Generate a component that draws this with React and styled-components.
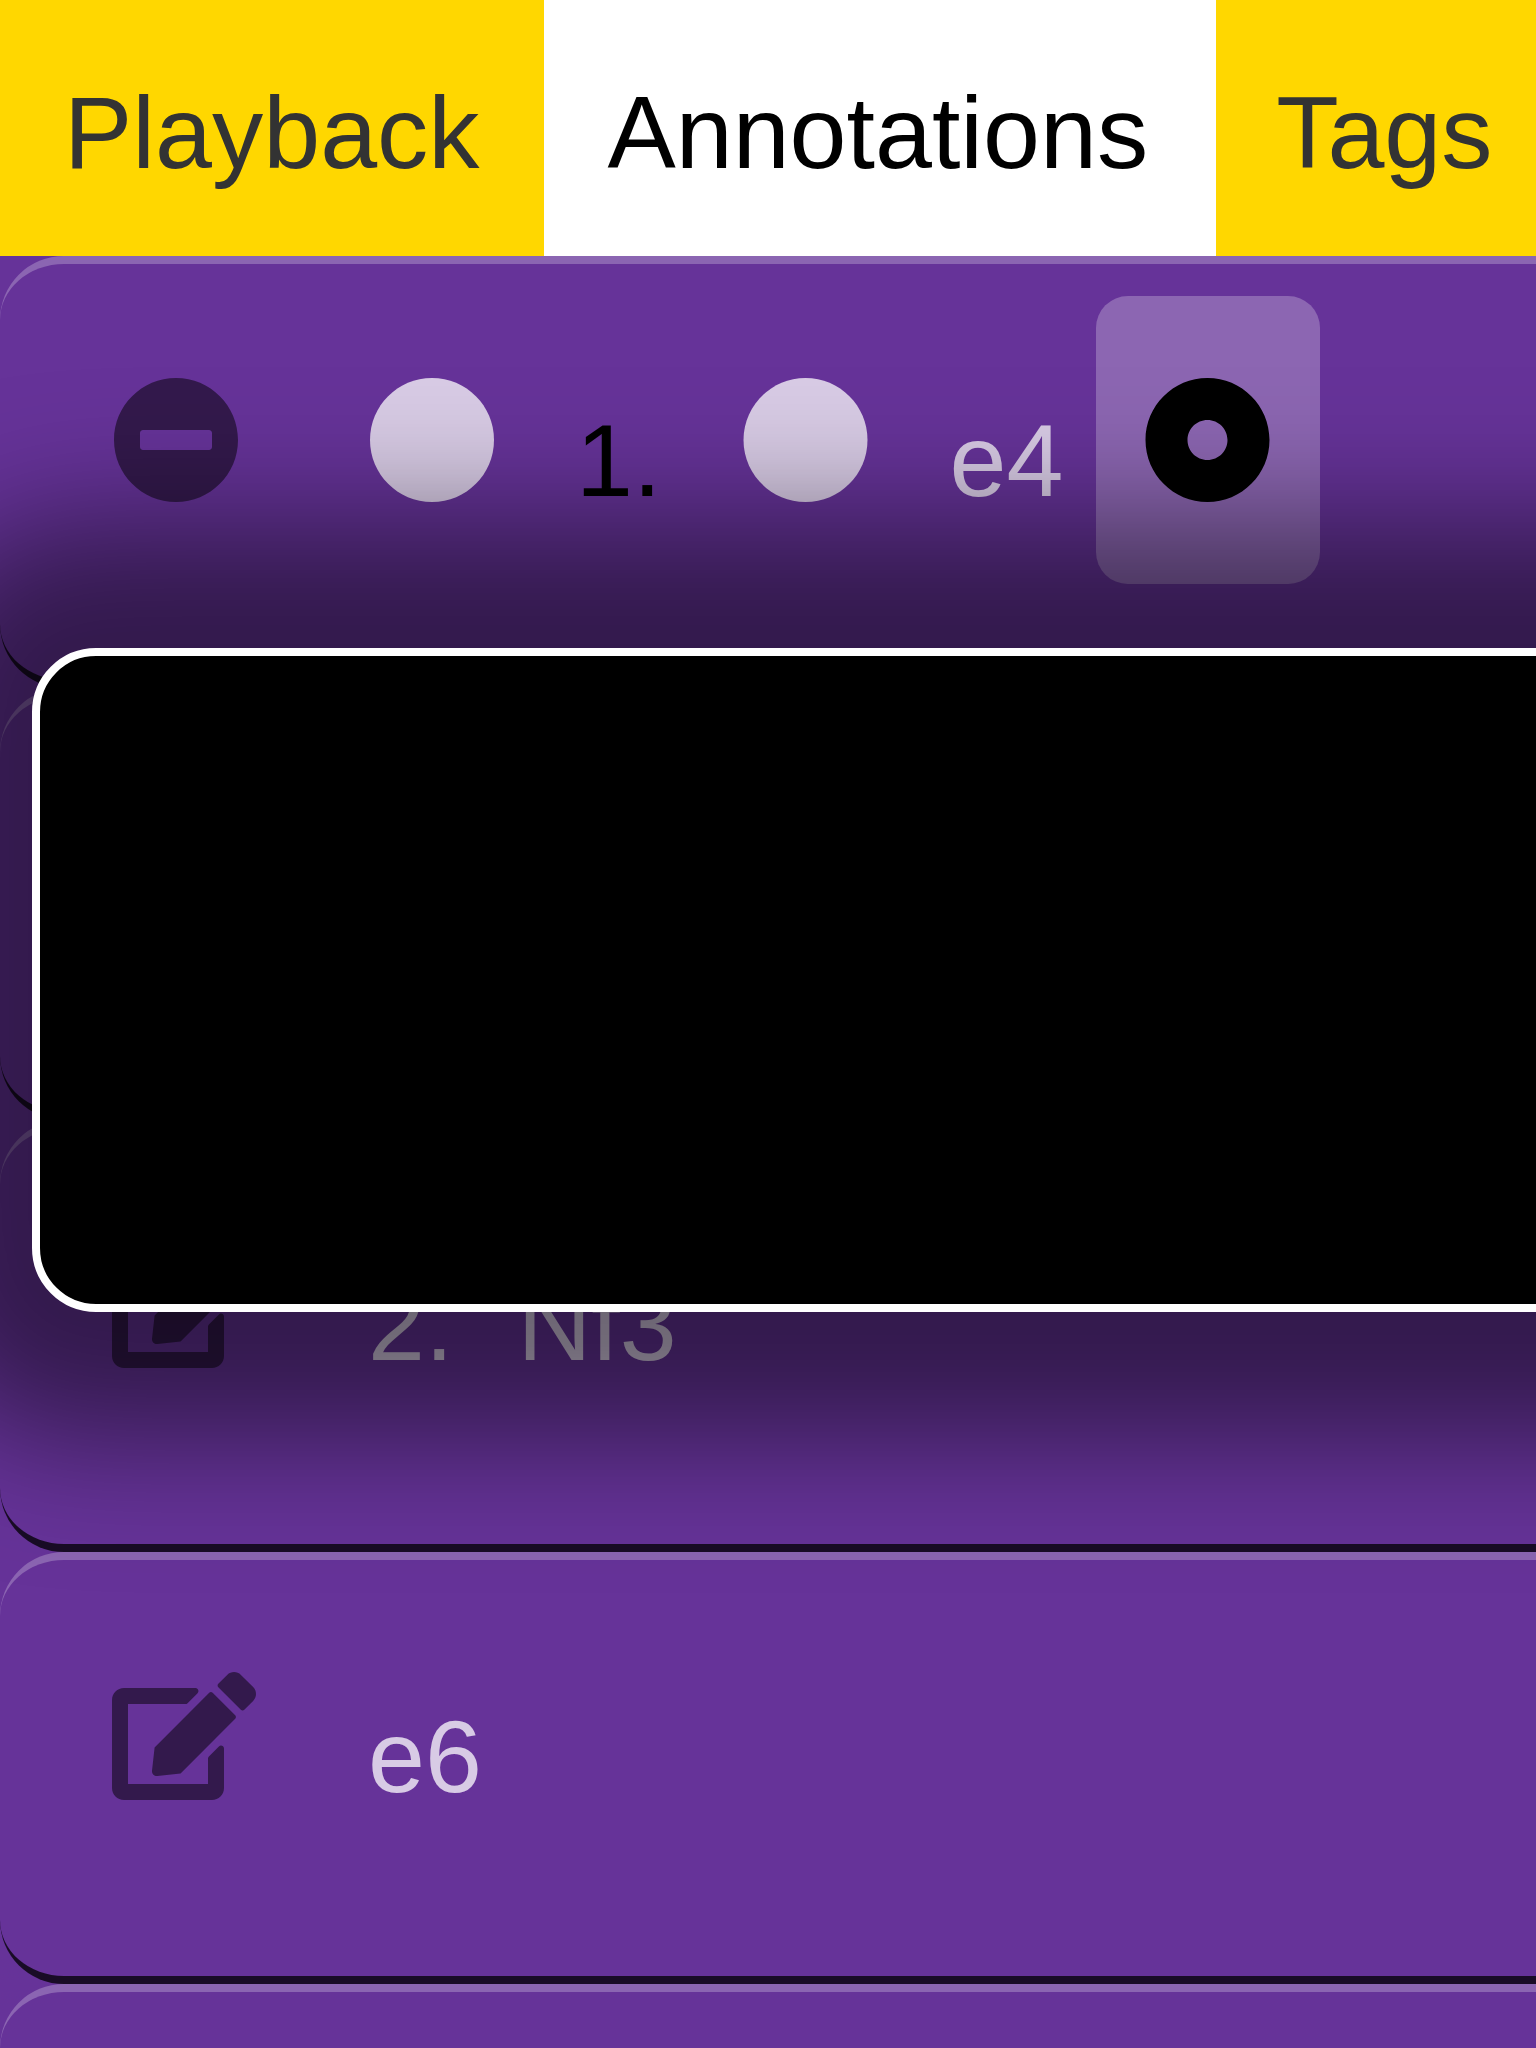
import React from "react";
import styled, { createGlobalStyle } from "styled-components";
import { FaCircle, FaDotCircle, FaEdit, FaMinusCircle } from "react-icons/fa";

const GlobalStyle = createGlobalStyle`
  * { box-sizing: border-box; }
  html, body { margin: 0; padding: 0; }
  body {
    background: #663399;
    font-family: "Liberation Sans", Arial, sans-serif;
    font-size: 102.4px;
    line-height: 115px;
    overflow: hidden;
  }
`;

const Screen = styled.div`
  position: relative;
  width: 100%;
  height: 2048px;
  overflow: hidden;
  background: #663399;
`;

const TabBar = styled.nav`
  display: flex;
  height: 256px;
  background: #ffd700;
`;

const Tab = styled.div`
  flex: 0 0 ${(p) => p.$width}px;
  padding: 75px 0 0 ${(p) => p.$inset}px;
  white-space: nowrap;
  color: ${(p) => (p.$active ? "#000" : "#333")};
  background: ${(p) => (p.$active ? "#fff" : "#ffd700")};
`;

const MoveList = styled.div`
  width: 2560px;
`;

const MoveRow = styled.div`
  display: flex;
  align-items: flex-start;
  height: 432px;
  padding: 32px 0 0 64px;
  border-top: 8px solid rgba(255, 255, 255, 0.25);
  border-bottom: 8px solid rgba(0, 0, 0, 0.75);
  border-radius: 64px;
`;

const Lead = styled.div`
  flex: 0 0 256px;
`;

const IconButton = styled.div`
  display: inline-flex;
  align-items: center;
  height: 288px;
  padding: 0 48px;
  border-radius: 32px;
  vertical-align: top;
  color: ${(p) => p.$color};
  background: ${(p) => (p.$selected ? "rgba(255, 255, 255, 0.25)" : "transparent")};

  svg {
    display: block;
    flex: none;
    width: ${(p) => (p.$wide ? 144 : 128)}px;
    height: 128px;
    transform: translateX(${(p) => p.$shift || 0}px);
  }
`;

const Move = styled.div`
  display: flex;
  padding-left: ${(p) => (p.$indent ? "16px" : "0")};
`;

const Label = styled.span`
  flex: none;
  width: ${(p) => (p.$width ? `${p.$width}px` : "auto")};
  padding: 107px 0 0 ${(p) => p.$inset ?? 32}px;
  margin-right: ${(p) => (p.$width ? 0 : 32)}px;
  white-space: pre;
  color: ${(p) => (p.$dark ? "#000" : "rgba(255, 255, 255, 0.75)")};
`;

const Popup = styled.div`
  position: absolute;
  top: 648px;
  left: 32px;
  width: 2496px;
  height: 664px;
  border: 8px solid #fff;
  border-radius: 64px;
  background: #000;
  box-shadow: 0 0 128px 128px rgba(0, 0, 0, 0.5);
`;

const faded = "rgba(0, 0, 0, 0.5)";
const light = "rgba(255, 255, 255, 0.75)";

function EditRow({ labels }) {
  return (
    <MoveRow>
      <Lead>
        <IconButton $color={faded} $wide>
          <FaEdit />
        </IconButton>
      </Lead>
      <Move $indent>
        {labels.map((text) => (
          <Label key={text}>{text}</Label>
        ))}
      </Move>
    </MoveRow>
  );
}

export default function App() {
  return (
    <>
      <GlobalStyle />
      <Screen>
        <TabBar>
          <Tab $width={544} $inset={64}>Playback</Tab>
          <Tab $width={672} $inset={63.4} $active>Annotations</Tab>
          <Tab $width={360} $inset={60.2}>Tags</Tab>
        </TabBar>
        <MoveList>
          <MoveRow>
            <Lead>
              <IconButton $color={faded}>
                <FaMinusCircle />
              </IconButton>
            </Lead>
            <Move>
              <IconButton $color={light}>
                <FaCircle />
              </IconButton>
              <Label $dark $width={150}>1.</Label>
              <IconButton $color={light} $shift={-0.5}>
                <FaCircle />
              </IconButton>
              <Label $width={178} $inset={31.5}>e4</Label>
              <IconButton $color="#000" $selected $shift={-0.5}>
                <FaDotCircle />
              </IconButton>
            </Move>
          </MoveRow>
          <MoveRow />
          <EditRow labels={["2.", "Nf3"]} />
          <EditRow labels={["e6"]} />
          <MoveRow />
        </MoveList>
        <Popup />
      </Screen>
    </>
  );
}
